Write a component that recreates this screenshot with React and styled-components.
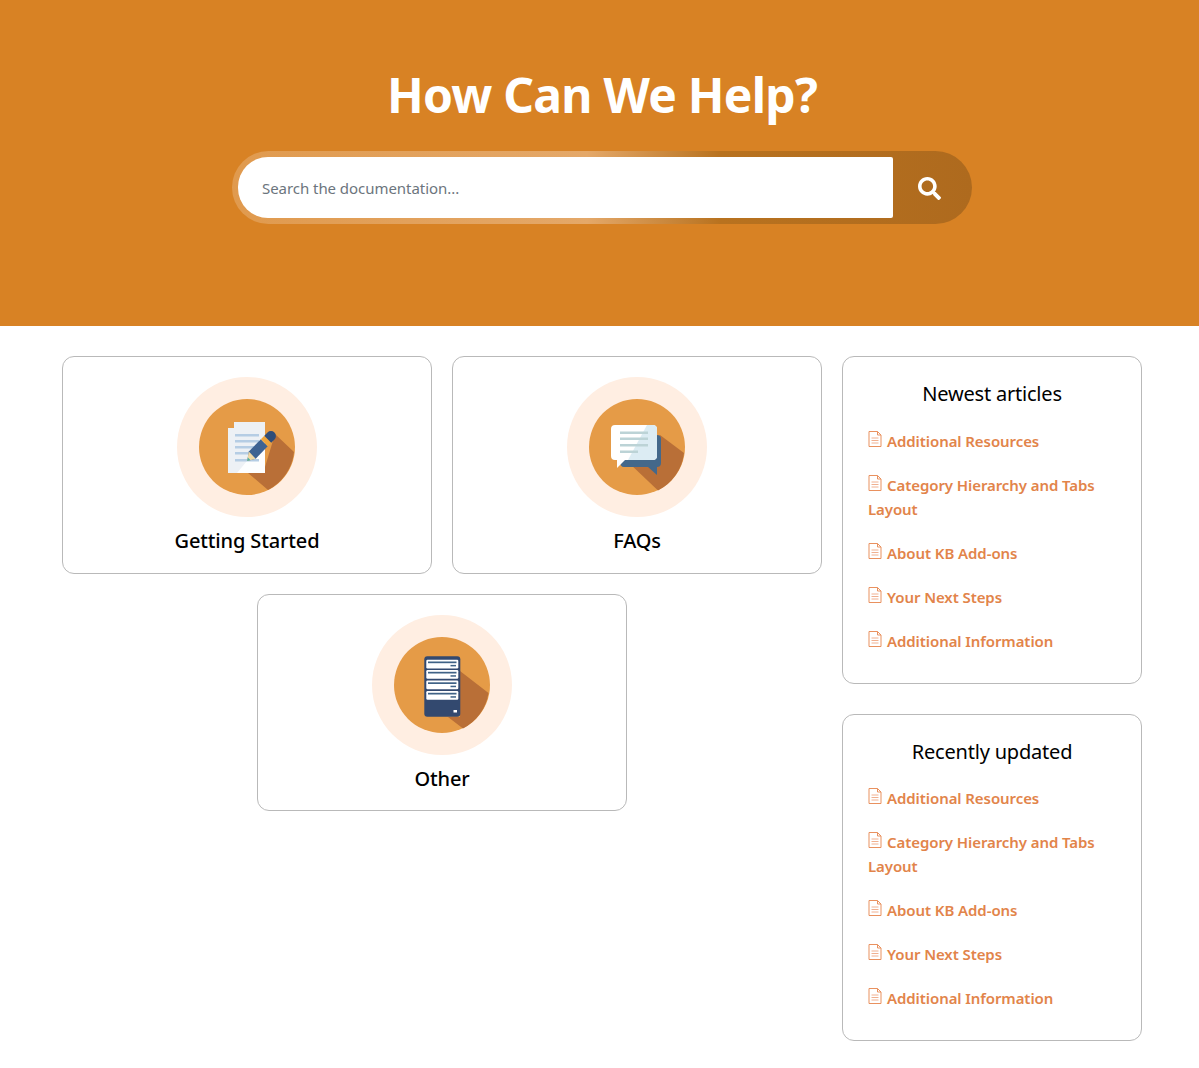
import React from "react";
import styled, { createGlobalStyle } from "styled-components";
import { FaSearch } from "react-icons/fa";

const Global = createGlobalStyle`
  html, body { margin: 0; padding: 0; background: #fff; }
  body { font-family: "Noto Sans", "Open Sans", sans-serif; }
  * { box-sizing: border-box; }
`;
const Page = styled.div`width: 1199px; height: 1068px; overflow: hidden;`;
const Hero = styled.header`
  height: 326px; background: #d88224; padding: 64px 0 0 5px;
  display: flex; flex-direction: column; align-items: center;
`;
const Title = styled.h1`
  margin: 0; color: #fff; font-size: 48px; line-height: 62px; font-weight: 700; letter-spacing: -0.75px;
`;
const SearchRing = styled.form`
  margin-top: 25px; width: 740px; height: 73px; padding: 6px 0 6px 6px; border-radius: 37px;
  display: flex;
  background: linear-gradient(90deg, #e09a4e 0%, #e4a869 48%, #b8721f 66%, #ae6a1e 100%);
`;
const SearchInput = styled.input`
  flex: 1; height: 61px; border: 0; outline: 0; background: #fff; padding: 0 24px;
  border-radius: 30px 2px 2px 30px; font: 400 15px "Noto Sans", sans-serif; color: #555;
  letter-spacing: -0.05px;
  &::placeholder { color: #6c757d; opacity: 1; }
`;
const SearchButton = styled.button`
  width: 79px; height: 61px; border: 0; background: transparent; color: #fff; padding: 2px 7px 0 0;
  display: flex; align-items: center; justify-content: center; font-size: 23px;
`;
const Main = styled.main`
  width: 1080px; margin: 30px 0 0 62px; display: flex; gap: 20px; align-items: flex-start;
`;
const Categories = styled.section`
  width: 760px; display: flex; flex-wrap: wrap; justify-content: center; gap: 20px;
`;
const CategoryCard = styled.a`
  width: 370px; height: ${p => p.$height}px; border: 1px solid #b9b9b9; border-radius: 12px; background: #fff;
  display: flex; flex-direction: column; align-items: center; padding-top: 20px;
`;
const CategoryIcon = styled.svg`width: 140px; height: 140px; display: block;`;
const CategoryName = styled.h2`
  margin: 9px 0 0; font-size: 20px; line-height: 30px; font-weight: 500; color: #000; letter-spacing: -0.14px;
`;
const Sidebar = styled.aside`width: 300px; display: flex; flex-direction: column; gap: 30px;`;
const Panel = styled.section`
  border: 1px solid #b9b9b9; border-radius: 12px; padding: 21px 25px 30px; background: #fff;
`;
const PanelTitle = styled.h3`
  margin: 0 0 ${p => p.$gap}px; text-align: center; font-size: 20px; line-height: 32px; font-weight: 400; color: #000;
  letter-spacing: -0.2px;
`;
const ArticleList = styled.ul`
  list-style: none; margin: 0; padding: 0; display: flex; flex-direction: column; gap: 20px;
`;
const Article = styled.li`
  font-size: 15px; line-height: 24px; font-weight: 600; color: #e2844a; letter-spacing: -0.08px;
`;
const DocGlyph = styled.svg`
  width: 14px; height: 16px; vertical-align: 0; margin-right: 5px;
`;

const Base = () => (
  <>
    <circle cx="70" cy="70" r="70" fill="#ffeee2" />
    <circle cx="70" cy="70" r="48" fill="#e59b47" />
  </>
);

const GettingStartedArt = () => (
  <CategoryIcon viewBox="0 0 140 140">
    <Base />
    <path d="M98 57 L117 75 A48 48 0 0 1 91 113 L71 96 L88 90 Z" fill="#b96f37" />
    <path d="M51 51 H57 V45 H88 V96 H51 Z" fill="#fdfefe" />
    <path d="M51 51 H57 V45 H88 V62 L60 96 H51 Z" fill="#edf1f5" />
    <path d="M58 57h24v2.5h-24zM58 63h24v2.5h-24zM58 69h22v2.5h-22zM58 75h17v2.5h-17zM58 82h24v2.5h-24z" fill="#b5cde4" />
    <path d="M70.2 84 L71.8 74.5 L83.8 62.3 L90.7 69.2 L78.7 81.7 Z" fill="#3e6392" />
    <path d="M83.8 62.3 L87.3 58.8 L94.2 65.7 L90.7 69.2 Z" fill="#eda53e" />
    <path d="M87.3 58.8 L90.5 55.5 A4.8 4.8 0 0 1 97.5 62.4 L94.2 65.7 Z" fill="#2f4d79" />
    <path d="M71.8 74.5 L78.7 81.7 L70.2 84 Z" fill="#f0d9a5" />
    <path d="M70.9 80.5 L73.4 83 L70.2 84 Z" fill="#4fb0a0" />
  </CategoryIcon>
);

const FaqArt = () => (
  <CategoryIcon viewBox="0 0 140 140">
    <Base />
    <path d="M93 58 L117 76 A48 48 0 0 1 91 113.5 L61 85 Z" fill="#b96f37" />
    <path d="M70 58 H90 Q94 58 94 62 V86 Q94 90 90 90 V98 L81 90 H57 Q53 90 53 84 Z" fill="#44688a" />
    <path d="M48 48 H85.5 Q90 48 90 52 V79 Q90 83 85.5 83 H58 L50 91 V83 H48 Q44 83 44 79 V52 Q44 48 48 48 Z" fill="#fff" />
    <path d="M80 48 H85.5 Q90 48 90 52 V79 Q90 83 85.5 83 H61 Z" fill="#dcecf3" />
    <path d="M53 54.5h28v2.5h-28zM53 60.5h28v2.5h-28zM53 67h28v2.5h-28zM53 73.5h18v2.5h-18z" fill="#bcd3d6" />
  </CategoryIcon>
);

const OtherArt = () => (
  <CategoryIcon viewBox="0 0 140 140">
    <Base />
    <path d="M88 56 L116.5 78 A48 48 0 0 1 91 113.5 L76 102 H88 Z" fill="#b96f37" />
    <rect x="52.3" y="41.3" width="36" height="60.4" rx="3" fill="#33496f" />
    {[44.7, 55, 65.5, 76].map(y => (
      <g key={y}>
        <rect x="54.3" y={y} width="32" height="8.8" rx="1.2" fill="#fff" />
        <rect x="56" y={y + 1.8} width="28.5" height="1.7" fill="#3f6286" />
        <rect x="78.5" y={y + 5.2} width="5.5" height="1.5" fill="#3f6286" />
      </g>
    ))}
    <rect x="81.5" y="95" width="3.5" height="2.5" fill="#fff" />
  </CategoryIcon>
);

const DocIcon = () => (
  <DocGlyph viewBox="0 0 14 16" fill="none" stroke="#e9915f" strokeWidth="1">
    <path d="M1 .5 H9.5 L13 4 V15.5 H1 Z" />
    <path d="M9.5 .5 V4 H13" />
    <path d="M3.5 7h7M3.5 9.5h7M3.5 12h7" stroke="#f0b090" />
  </DocGlyph>
);

const articles = [
  "Additional Resources",
  "Category Hierarchy and Tabs Layout",
  "About KB Add-ons",
  "Your Next Steps",
  "Additional Information",
];

const ArticlePanel = ({ title, gap }) => (
  <Panel>
    <PanelTitle $gap={gap}>{title}</PanelTitle>
    <ArticleList>
      {articles.map(a => (
        <Article key={a}><DocIcon />{a}</Article>
      ))}
    </ArticleList>
  </Panel>
);

export default function App() {
  return (
    <Page>
      <Global />
      <Hero>
        <Title>How Can We Help?</Title>
        <SearchRing onSubmit={e => e.preventDefault()}>
          <SearchInput placeholder="Search the documentation..." />
          <SearchButton type="submit" aria-label="Search"><FaSearch /></SearchButton>
        </SearchRing>
      </Hero>
      <Main>
        <Categories>
          <CategoryCard $height={218}><GettingStartedArt /><CategoryName>Getting Started</CategoryName></CategoryCard>
          <CategoryCard $height={218}><FaqArt /><CategoryName>FAQs</CategoryName></CategoryCard>
          <CategoryCard $height={217}><OtherArt /><CategoryName>Other</CategoryName></CategoryCard>
        </Categories>
        <Sidebar>
          <ArticlePanel title="Newest articles" gap={19} />
          <ArticlePanel title="Recently updated" gap={18} />
        </Sidebar>
      </Main>
    </Page>
  );
}
